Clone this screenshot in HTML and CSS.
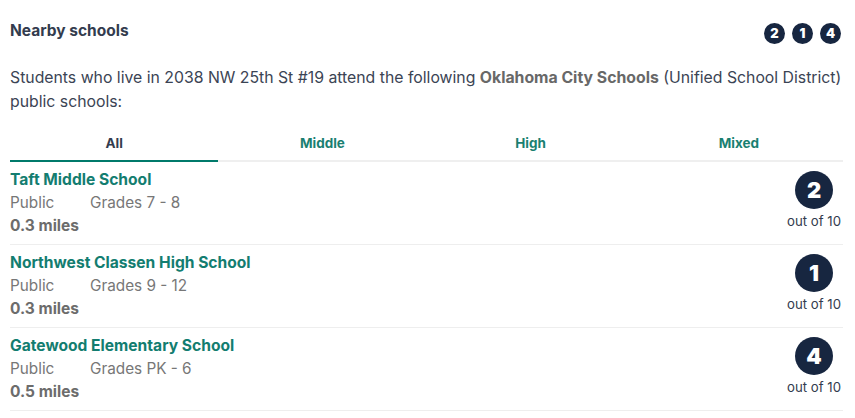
FILE: index.html
```html
<!DOCTYPE html>
<html>
<head>
<meta charset="utf-8">
<link rel="stylesheet" href="styles.css">
</head>
<body>
<section class="nearby">
  <header class="head">
    <h2 class="title">Nearby schools</h2>
    <div class="mini-badges">
      <span class="mini">2</span><span class="mini">1</span><span class="mini">4</span>
    </div>
  </header>
  <p class="intro">Students who live in 2038 NW 25th St #19 attend the following <b>Oklahoma City Schools</b> (Unified School District) public schools:</p>
  <nav class="tabs">
    <span class="tab active">All</span>
    <span class="tab">Middle</span>
    <span class="tab">High</span>
    <span class="tab">Mixed</span>
  </nav>
  <ul class="list">
    <li class="school">
      <div class="info">
        <a class="name">Taft Middle School</a>
        <div class="meta"><span class="type">Public</span><span>Grades 7 - 8</span></div>
        <div class="dist">0.3 miles</div>
      </div>
      <div class="rating"><span class="circle">2</span><span class="of">out of 10</span></div>
    </li>
    <li class="school">
      <div class="info">
        <a class="name">Northwest Classen High School</a>
        <div class="meta"><span class="type">Public</span><span>Grades 9 - 12</span></div>
        <div class="dist">0.3 miles</div>
      </div>
      <div class="rating"><span class="circle">1</span><span class="of">out of 10</span></div>
    </li>
    <li class="school">
      <div class="info">
        <a class="name">Gatewood Elementary School</a>
        <div class="meta"><span class="type">Public</span><span>Grades PK - 6</span></div>
        <div class="dist">0.5 miles</div>
      </div>
      <div class="rating"><span class="circle">4</span><span class="of">out of 10</span></div>
    </li>
  </ul>
</section>
</body>
</html>
```
FILE: styles.css
```css
* { box-sizing: border-box; }
body {
  margin: 0;
  font-family: Inter, "Open Sans", sans-serif;
  color: #3b4454;
  background: #fff;
}
.nearby {
  padding: 18px 12px 0 10px;
}
.head {
  display: flex;
  justify-content: space-between;
  align-items: center;
  height: 24px;
}
.title {
  margin: 0;
  font-size: 15.5px;
  font-weight: 700;
  color: #333c4e;
}
.mini-badges {
  display: flex;
  gap: 7px;
  padding-top: 6px;
  padding-right: 2px;
}
.mini {
  width: 21px;
  height: 21px;
  border-radius: 50%;
  background: #172640;
  color: #fff;
  font-size: 13px;
  font-weight: 900;
  display: flex;
  align-items: center;
  justify-content: center;
}
.intro {
  margin: 24px 0 0;
  font-size: 15.8px;
  line-height: 24px;
  color: #3b4454;
}
.intro b { color: #686868; }
.tabs {
  display: flex;
  margin-top: 14px;
  border-bottom: 2px solid #efefef;
}
.tab {
  flex: 1;
  text-align: center;
  font-size: 13.5px;
  font-weight: 700;
  color: #1a7f71;
  height: 34px;
  padding-top: 7px;
  margin-bottom: -2px;
  border-bottom: 2px solid transparent;
}
.tab.active {
  color: #333c4e;
  border-bottom-color: #007a6b;
}
.list {
  list-style: none;
  margin: 0;
  padding: 0;
}
.school {
  display: flex;
  justify-content: space-between;
  align-items: center;
  height: 83px;
  border-bottom: 1px solid #eeeeee;
}
.info {
  display: flex;
  flex-direction: column;
  padding-bottom: 2px;
}
.name {
  font-size: 15.6px;
  font-weight: 700;
  color: #137d70;
  line-height: 23px;
}
.meta {
  font-size: 15.3px;
  line-height: 23px;
  color: #777;
  display: flex;
}
.type { width: 80px; }
.dist {
  font-size: 15.5px;
  font-weight: 700;
  color: #6c6c6c;
  line-height: 23px;
}
.rating {
  display: flex;
  flex-direction: column;
  align-items: center;
  gap: 4px;
  padding-bottom: 6px;
  margin-right: 2px;
}
.circle {
  width: 38px;
  height: 38px;
  border-radius: 50%;
  background: #172640;
  color: #fff;
  font-size: 22px;
  font-weight: 900;
  display: flex;
  align-items: center;
  justify-content: center;
}
.of {
  font-size: 13.2px;
  color: #333c4e;
}
```
